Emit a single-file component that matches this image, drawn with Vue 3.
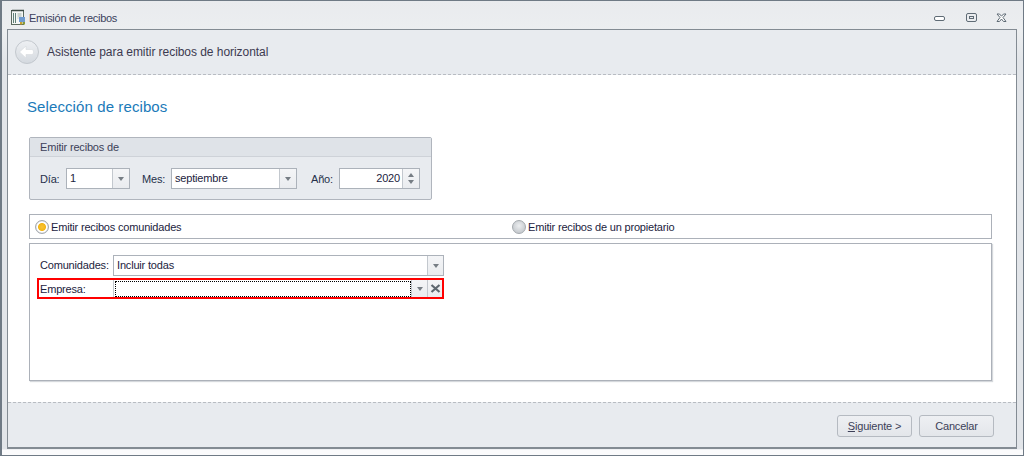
<script setup>
</script>

<template>
  <div class="window">
    <div class="titlebar">
      <svg class="app-icon" width="17" height="17" viewBox="0 0 17 17">
        <rect x="1.5" y="1.5" width="12" height="14" fill="#f4f6f4" stroke="#5a6a60" />
        <path d="M1 1.500h13M3 0.500v2M5 0.500v2M7 0.500v2M9 0.500v2M11 0.500v2M13 0.500v2" stroke="#3d4a44" stroke-width="1" fill="none" />
        <path d="M3 4h1v10H3zM5 4h1v10H5z" fill="#5f8078" />
        <path d="M7.500 5h4M7.500 7h4M7.500 9h1" stroke="#9fb0aa" />
        <rect x="9" y="8" width="6" height="5" fill="#6f9bd0" />
        <rect x="10" y="13" width="2" height="2.500" fill="#c9a02d" />
        <rect x="12.500" y="13" width="2.500" height="2.500" fill="#8a9a3a" />
      </svg>
      <span class="title">Emisión de recibos</span>
      <div class="win-btns">
        <svg class="min" width="12" height="6" viewBox="0 0 12 6"><rect x="0.5" y="0.5" width="10" height="4" rx="1.5" fill="#fff" stroke="#5f6b75" /></svg>
        <svg width="12" height="10" viewBox="0 0 12 10"><rect x="0.5" y="0.5" width="10" height="8" rx="1.5" fill="none" stroke="#5f6b75" /><rect x="3.5" y="3.5" width="4" height="2" fill="none" stroke="#5f6b75" /></svg>
        <svg class="close" width="12" height="10" viewBox="0 0 12 10"><path d="M1 1h2.500L5.500 3.200L7.500 1H10L7 4.500L10 8.500H7.500L5.500 6L3.500 8.500H1L4 4.500Z" fill="#fff" stroke="#5f6b75" /></svg>
      </div>
    </div>
    <div class="frame">
      <div class="wizard-head">
        <svg width="26" height="26" viewBox="0 0 26 26">
          <defs>
            <linearGradient id="bk" x1="0" y1="0" x2="0" y2="1"><stop offset="0" stop-color="#eef0f3" /><stop offset="1" stop-color="#d4d9df" /></linearGradient>
          </defs>
          <circle cx="13" cy="13" r="11.500" fill="url(#bk)" stroke="#c3c8ce" />
          <path d="M5.500 13L12 7v3.500h5.500c1.500 0 2 1 2 2.500s-.5 2.500-2 2.500H12V19Z" fill="#fff" stroke="#d6dade" stroke-width=".6" />
        </svg>
        <span class="head-text">Asistente para emitir recibos de horizontal</span>
      </div>
      <div class="content">
        <h1 class="page-title">Selección de recibos</h1>

        <section class="group">
          <div class="group-head">Emitir recibos de</div>
          <div class="group-row">
            <label class="lbl-dia">Día:</label>
            <div class="edit w-dia">
              <span class="val">1</span>
              <span class="drop"><i class="arrow"></i></span>
            </div>
            <label class="lbl-mes">Mes:</label>
            <div class="edit w-mes">
              <span class="val">septiembre</span>
              <span class="drop"><i class="arrow"></i></span>
            </div>
            <label class="lbl-ano">Año:</label>
            <div class="edit w-ano">
              <span class="val right">2020</span>
              <span class="spin"><i class="arrow up"></i><i class="arrow"></i></span>
            </div>
          </div>
        </section>

        <div class="radio-box">
          <div class="radio-cell first">
            <span class="radio on"></span>
            <span>Emitir recibos comunidades</span>
          </div>
          <div class="radio-cell">
            <span class="radio"></span>
            <span>Emitir recibos de un propietario</span>
          </div>
        </div>

        <div class="panel">
          <div class="row-com">
            <label class="row-label">Comunidades:</label>
            <div class="edit w-com">
              <span class="val">Incluir todas</span>
              <span class="drop big"><i class="arrow"></i></span>
            </div>
          </div>
          <div class="row-emp">
            <label class="emp-label">Empresa:</label>
            <div class="emp-edit">
              <span class="focus"></span>
              <span class="drop emp-drop"><i class="arrow"></i></span>
              <span class="drop emp-x">
                <svg width="11" height="9" viewBox="0 0 11 9"><path d="M1.500 1L9.500 8M9.500 1L1.500 8" stroke="#5f6870" stroke-width="2.200" fill="none" /></svg>
              </span>
            </div>
          </div>
        </div>
      </div>
      <div class="footer">
        <button class="btn"><span><u>S</u>iguiente &gt;</span></button>
        <button class="btn">Cancelar</button>
      </div>
    </div>
  </div>
</template>

<style>
html, body { margin: 0; padding: 0; background: #fff; }
</style>

<style scoped>
* { box-sizing: border-box; }
.window {
  width: 1024px;
  height: 456px;
  display: flex;
  flex-direction: column;
  border: 1px solid #6f7a85;
  border-left-width: 2px;
  background: linear-gradient(#e9ebee 0, #eceef0 30px, #e2e5e9 60px, #e2e5e9 448px, #fbfbfc 449px);
  padding: 0 6px 6px 5px;
  font-family: "Liberation Sans", sans-serif;
  font-size: 11px;
  letter-spacing: -0.18px;
  color: #25304a;
  overflow: hidden;
}
.titlebar {
  height: 28px;
  flex: none;
  display: flex;
  align-items: center;
  padding-top: 5px;
}
.app-icon { margin: 0 2px 0 3px; flex: none; }
.title { color: #3a3f5c; font-size: 11px; letter-spacing: -0.27px; }
.win-btns {
  margin-left: auto;
  display: flex;
  align-items: center;
  gap: 20px;
  padding-right: 9px;
}
.win-btns .min { margin-top: 2px; }
.win-btns .close { margin-left: -2px; }
.frame {
  flex: 1;
  display: flex;
  flex-direction: column;
  border: 1px solid #838b93;
  border-bottom-width: 2px;
  background: #fff;
  min-height: 0;
}
.wizard-head {
  height: 45px;
  flex: none;
  display: flex;
  align-items: center;
  gap: 7px;
  padding-left: 6px;
  background: #e8ebef;
  border-bottom: 1px dashed #b8bcc2;
}
.head-text { font-size: 12px; color: #3c3a50; letter-spacing: -0.05px; }
.content {
  flex: 1;
  padding: 0 23px 0 21px;
  min-height: 0;
}
.page-title {
  margin: 22px 0 0 -2px;
  height: 20px;
  line-height: 20px;
  font-size: 15px;
  font-weight: 400;
  letter-spacing: 0.1px;
  color: #1b7ab9;
}
.group {
  margin-top: 20px;
  width: 403px;
  height: 63px;
  border: 1px solid #b0b5bd;
  border-radius: 2px;
  background: #e8ebef;
}
.group-head {
  height: 19px;
  line-height: 18px;
  padding-left: 10px;
  background: #dfe3e8;
  border-bottom: 1px solid #ced2d8;
  color: #3c3f58;
}
.group-row {
  display: flex;
  align-items: center;
  margin-top: 11px;
  padding-left: 10px;
  height: 21px;
}
.lbl-dia { width: 26px; }
.lbl-mes { width: 29px; margin-left: 12px; }
.lbl-ano { width: 28px; margin-left: 14px; }
.edit {
  height: 21px;
  display: flex;
  border: 1px solid #acb2ba;
  background: #fff;
  color: #1c2340;
}
.w-dia { width: 64px; }
.w-mes { width: 126px; }
.w-ano { width: 81px; }
.w-com { width: 331px; }
.val { flex: 1; line-height: 18px; padding-left: 3px; }
.val.right { text-align: right; padding-right: 2px; }
.drop, .spin {
  width: 17px;
  flex: none;
  border-left: 1px solid #c3c8ce;
  background: linear-gradient(#f4f5f7, #eaecef);
  display: flex;
  align-items: center;
  justify-content: center;
}
.spin { flex-direction: column; gap: 3px; }
.arrow {
  display: block;
  width: 0;
  height: 0;
  border-left: 3.500px solid transparent;
  border-right: 3.500px solid transparent;
  border-top: 4px solid #767d84;
}
.arrow.up { border-top: 0; border-bottom: 4px solid #767d84; }
.radio-box {
  margin-top: 14px;
  width: 963px;
  height: 25px;
  display: flex;
  align-items: center;
  border: 1px solid #acb1b9;
  color: #1c2340;
}
.radio-cell { display: flex; align-items: center; gap: 2px; padding-left: 5px; }
.radio-cell.first { width: 477px; }
.radio {
  width: 14px;
  height: 14px;
  flex: none;
  border-radius: 50%;
  border: 1px solid #a4a9ae;
  background: radial-gradient(circle at 50% 40%, #eceef0, #c8ccd0 70%);
}
.radio.on {
  background: radial-gradient(circle, #f9c437 0, #f3b619 42%, #fff 52%, #fff 60%, #d2d5d9 72%);
}
.panel {
  margin-top: 4px;
  width: 963px;
  height: 138px;
  padding: 11px 0 0 7px;
  border: 1px solid #acb1b9;
  box-shadow: 1px 1px 1px #d5d8dc;
}
.row-com { display: flex; align-items: center; height: 21px; margin-bottom: 2px; }
.row-label { width: 76px; padding-left: 3px; padding-bottom: 1px; flex: none; color: #1c2340; }
.row-emp {
  width: 407px;
  height: 21px;
  display: flex;
  border: 2px solid #f00;
}
.emp-label { width: 75px; flex: none; padding-left: 1px; line-height: 19px; color: #1c2340; border-right: 1px solid #c3c8ce; }
.emp-edit { flex: 1; display: flex; }
.focus {
  flex: 1;
  margin: 1px 0 0 1px;
  border: 1px dotted #000;
}
.emp-drop { width: 16px; }
.emp-x { width: 15px; }
.drop.big { width: 16px; }
.footer {
  height: 45px;
  flex: none;
  display: flex;
  justify-content: flex-end;
  align-items: flex-start;
  gap: 7px;
  padding: 12px 22px 0 0;
  background: #e8ebef;
  border-top: 1px dashed #b8bcc2;
}
.btn {
  width: 75px;
  height: 22px;
  padding: 0;
  border: 1px solid #b5bac1;
  border-radius: 3px;
  background: linear-gradient(#eef0f3, #e3e6ea);
  font: inherit;
  letter-spacing: inherit;
  color: #3c3f58;
}
</style>
